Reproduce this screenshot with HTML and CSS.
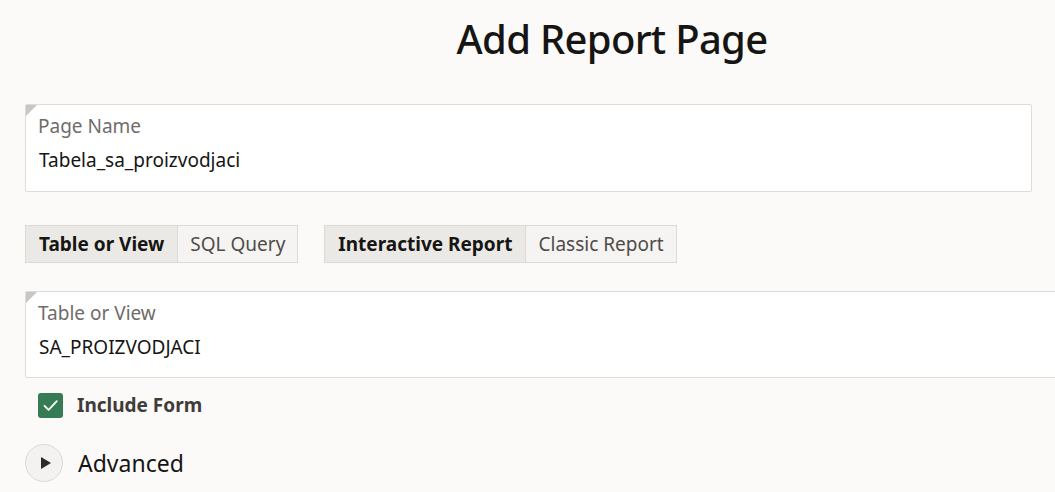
FILE: index.html
```html
<!DOCTYPE html>
<html lang="en">
<head>
<meta charset="utf-8">
<title>Add Report Page</title>
<link rel="stylesheet" href="styles.css">
</head>
<body>
<div class="page">
  <h1 class="title">Add Report Page</h1>
  <div class="content">
    <div class="field field-name">
      <span class="corner"></span>
      <label class="field-label">Page Name</label>
      <div class="field-value">Tabela_sa_proizvodjaci</div>
    </div>
    <div class="toggles">
      <div class="seg">
        <span class="seg-btn is-on">Table or View</span>
        <span class="seg-btn">SQL Query</span>
      </div>
      <div class="seg">
        <span class="seg-btn is-on">Interactive Report</span>
        <span class="seg-btn">Classic Report</span>
      </div>
    </div>
    <div class="field field-table">
      <span class="corner"></span>
      <label class="field-label">Table or View</label>
      <div class="field-value">SA_PROIZVODJACI</div>
    </div>
    <div class="check-row">
      <span class="checkbox">
        <svg width="25" height="25" viewBox="0 0 25 25"><path d="M6.5 12.8 L10.6 16.9 L18.8 8.2" fill="none" stroke="#ffffff" stroke-width="1.8" stroke-linecap="round" stroke-linejoin="round"/></svg>
      </span>
      <span class="check-label">Include Form</span>
    </div>
    <div class="adv-row">
      <span class="adv-btn">
        <svg width="12" height="14" viewBox="0 0 12 14"><path d="M1 1 L11 7 L1 13 Z" fill="#2b2b2b"/></svg>
      </span>
      <span class="adv-label">Advanced</span>
    </div>
  </div>
</div>
</body>
</html>
```
FILE: styles.css
```css
html, body {
  margin: 0;
  padding: 0;
  background: #fbfaf9;
  overflow: hidden;
}
body {
  font-family: "Noto Sans", "Open Sans", sans-serif;
  color: #161513;
}
.page {
  width: 1224px;
}
.title {
  margin: 0;
  padding-top: 14px;
  height: 90px;
  box-sizing: border-box;
  text-align: center;
  font-size: 40px;
  letter-spacing: -0.7px;
  font-weight: 500;
  line-height: 50px;
  color: #161513;
}
.content {
  padding-left: 25px;
}
.field {
  position: relative;
  background: #ffffff;
  border: 1px solid #dedbd8;
  border-radius: 2px;
  box-sizing: border-box;
  padding: 9px 12px 0 12px;
}
.field-name {
  width: 1007px;
  height: 88px;
  margin-top: 14px;
}
.field-table {
  width: 1100px;
  height: 87px;
  margin-top: 28px;
}
.corner {
  position: absolute;
  left: 0;
  top: 0;
  width: 0;
  height: 0;
  border-top: 11px solid #c9c7c4;
  border-right: 11px solid transparent;
}
.field-label {
  display: block;
  font-size: 19px;
  line-height: 25px;
  color: #6f6c69;
}
.field-value {
  margin-top: 9px;
  font-size: 19px;
  line-height: 25px;
  color: #161513;
  padding-left: 1px;
}
.toggles {
  display: flex;
  gap: 26px;
  margin-top: 33px;
}
.seg {
  display: flex;
}
.seg-btn {
  height: 38px;
  box-sizing: border-box;
  display: flex;
  align-items: center;
  padding: 0 12px;
  font-size: 19px;
  color: #4f4c49;
  background: #f5f4f2;
  border: 1px solid #dcd9d6;
}
.seg-btn + .seg-btn {
  border-left: none;
}
.seg-btn.is-on {
  background: #ebe9e6;
  color: #161513;
  font-weight: 700;
  padding: 0 13px;
}
.check-row {
  display: flex;
  align-items: center;
  gap: 14px;
  margin-top: 14px;
  padding-left: 13px;
}
.checkbox {
  width: 25px;
  height: 25px;
  border-radius: 3px;
  background: #357c55;
  display: flex;
}
.check-label {
  font-size: 19px;
  font-weight: 700;
  color: #3f3c3a;
}
.adv-row {
  display: flex;
  align-items: center;
  gap: 15px;
  margin-top: 26px;
}
.adv-btn {
  width: 38px;
  height: 38px;
  box-sizing: border-box;
  border-radius: 50%;
  border: 1px solid #dcd9d6;
  background: #f3f2f0;
  display: flex;
  align-items: center;
  justify-content: center;
  padding-left: 3px;
}
.adv-label {
  font-size: 23px;
  color: #161513;
}
```
